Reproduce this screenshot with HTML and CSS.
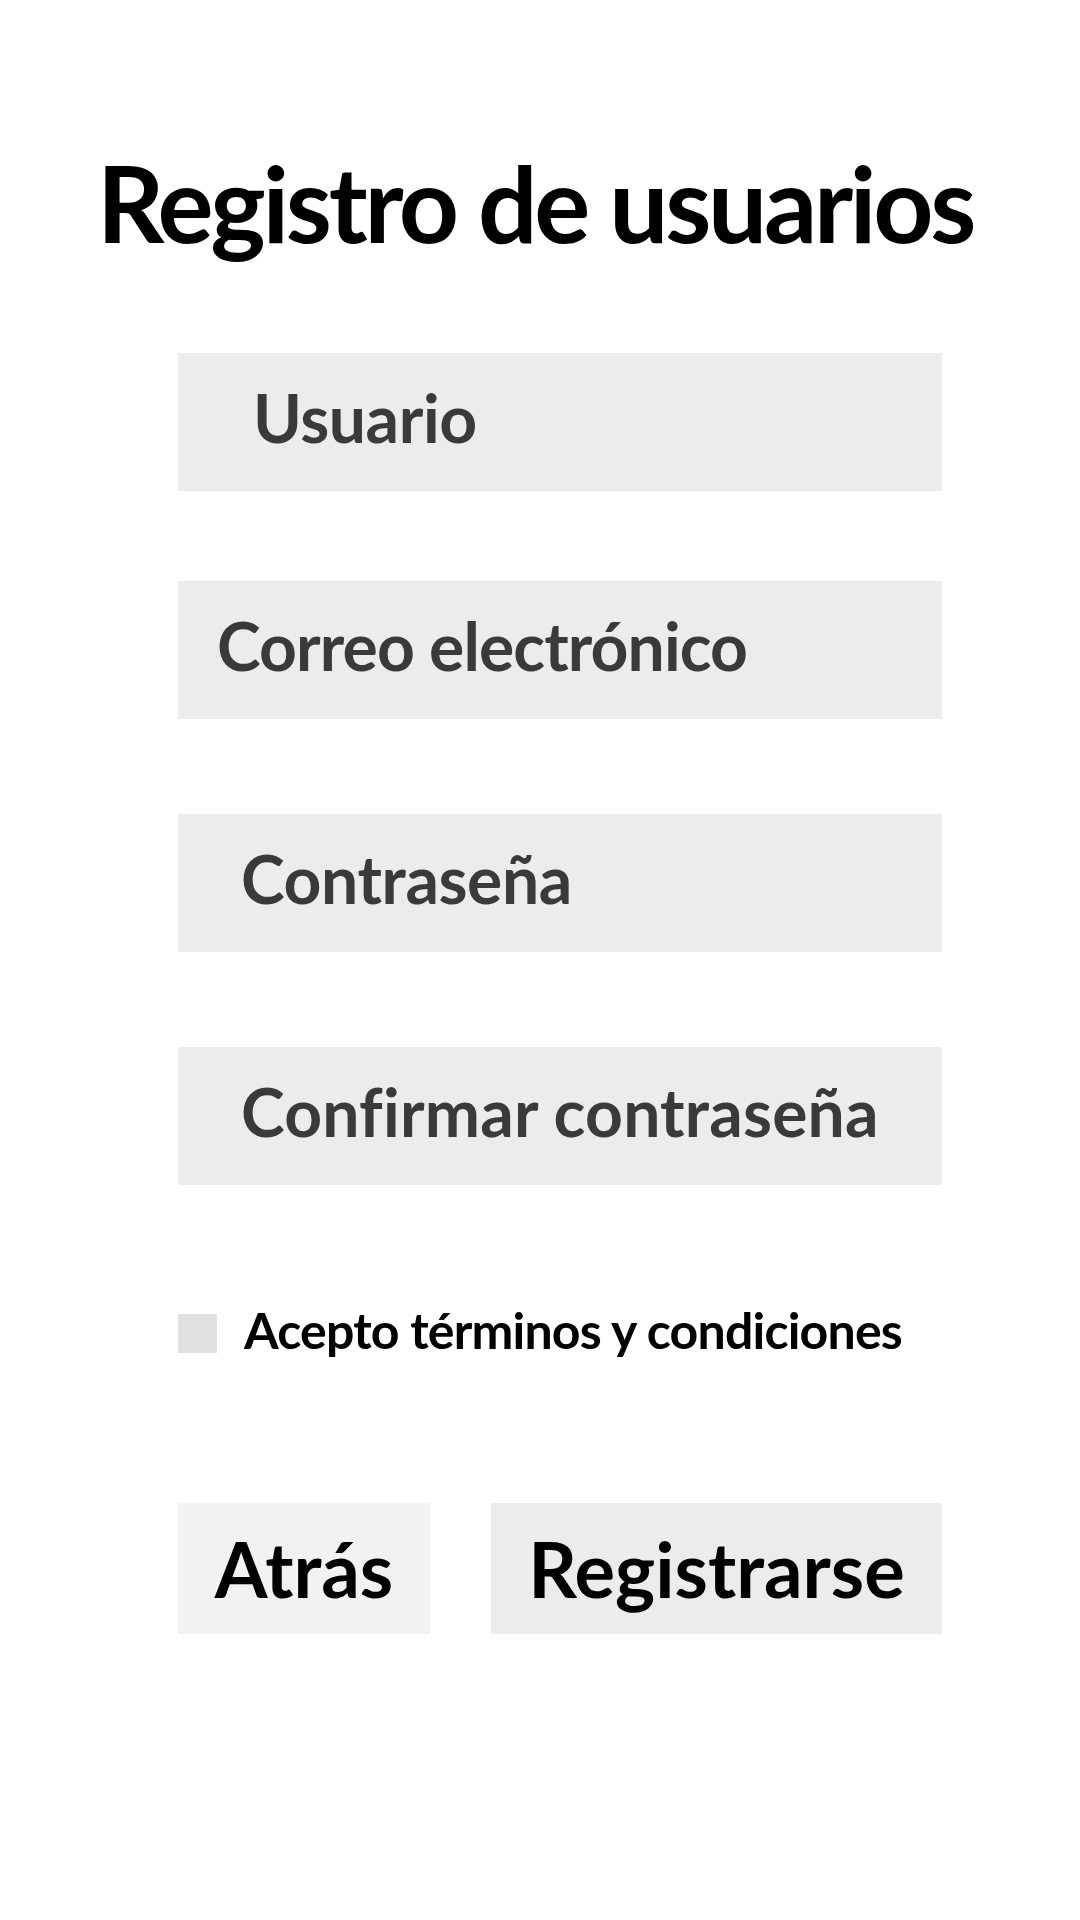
FILE: index.html
```html
<!DOCTYPE html>
<html lang="es">
<head>
<meta charset="utf-8">
<title>Registro de usuarios</title>
<link rel="stylesheet" href="styles.css">
</head>
<body>
<main class="page">
  <h1 class="title">Registro de usuarios</h1>
  <form class="form">
    <div class="field field-user">Usuario</div>
    <div class="field field-mail">Correo electrónico</div>
    <div class="field field-pass">Contraseña</div>
    <div class="field field-confirm">Confirmar contraseña</div>
    <label class="terms"><span class="box"></span><span class="terms-text">Acepto términos y condiciones</span></label>
    <div class="actions">
      <button type="button" class="btn btn-back">Atrás</button>
      <button type="button" class="btn btn-submit">Registrarse</button>
    </div>
  </form>
</main>
</body>
</html>
```
FILE: styles.css
```css
html, body {
  margin: 0;
  padding: 0;
  background: #ffffff;
}
body {
  width: 1080px;
  height: 1920px;
  font-family: Lato, "Open Sans", sans-serif;
  font-weight: 700;
  white-space: nowrap;
}
.page {
  display: flex;
  flex-direction: column;
  padding-top: 150px;
}
.title {
  margin: 0;
  font-size: 105px;
  line-height: 105px;
  text-align: center;
  color: #000;
  font-weight: 700;
  letter-spacing: -3.3px;
  padding-right: 10px;
}
.form {
  display: flex;
  flex-direction: column;
  width: 764px;
  margin-left: 178px;
  margin-top: 98px;
}
.field {
  height: 138px;
  background: #ececec;
  color: #3a3a3a;
  font-size: 66px;
  letter-spacing: -0.4px;
  display: flex;
  align-items: center;
  box-sizing: border-box;
  padding-bottom: 9px;
}
.field-user { padding-left: 75px; }
.field-mail { padding-left: 39px; margin-top: 90px; letter-spacing: -0.9px; }
.field-pass { padding-left: 63px; margin-top: 95px; }
.field-confirm { padding-left: 63px; margin-top: 95px; letter-spacing: 0.2px; }
.terms {
  display: flex;
  align-items: center;
  gap: 27px;
  margin-top: 121px;
  font-size: 50px;
  letter-spacing: -0.8px;
  color: #000;
}
.box {
  width: 39px;
  height: 39px;
  background: #e0e0e0;
  flex: none;
}
.terms-text {
  margin-top: -6px;
}
.actions {
  display: flex;
  gap: 61px;
  margin-top: 143px;
}
.btn {
  height: 131px;
  border: none;
  margin: 0;
  padding: 0;
  font-family: inherit;
  font-weight: 700;
  font-size: 76px;
  color: #000;
}
.btn-back {
  width: 252px;
  background: #f2f2f2;
}
.btn-submit {
  width: 451px;
  background: #ececec;
}
```
